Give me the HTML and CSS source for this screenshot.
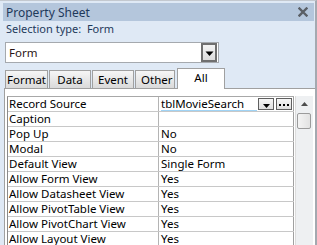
FILE: index.html
```html
<!DOCTYPE html>
<html>
<head>
<meta charset="utf-8">
<link rel="stylesheet" href="styles.css">
</head>
<body>
<div class="window">
  <div class="titlebar">
    <span class="title">Property Sheet</span>
    <svg class="close" width="10" height="10" viewBox="0 0 10 10"><path d="M1.5 1.5 L8.5 8.5 M8.5 1.5 L1.5 8.5" stroke="#5a5f66" stroke-width="2.4" stroke-linecap="square"/></svg>
  </div>
  <div class="seltype">Selection type:&nbsp;&nbsp;Form</div>
  <div class="combo">
    <span class="combo-text">Form</span>
    <span class="combo-btn"><svg width="9" height="6" viewBox="0 0 9 6"><path d="M0.5 0.5 H8.5 L4.5 5 Z" fill="#000"/></svg></span>
  </div>
  <div class="tabs">
    <div class="tab t-format">Format</div>
    <div class="tab t-data">Data</div>
    <div class="tab t-event">Event</div>
    <div class="tab t-other">Other</div>
    <div class="tab active t-all">All</div>
  </div>
  <div class="panel">
    <div class="grid">
      <div class="row"><div class="name">Record Source</div><div class="value first"><span class="vtext">tblMovieSearch</span><span class="mini-btn drop"><svg width="7" height="4" viewBox="0 0 7 4"><path d="M0 0 H7 L3.5 4 Z" fill="#000"/></svg></span><span class="mini-btn dots"><svg width="10" height="2" viewBox="0 0 10 2"><rect x="0" y="0" width="2" height="2" fill="#000"/><rect x="4" y="0" width="2" height="2" fill="#000"/><rect x="8" y="0" width="2" height="2" fill="#000"/></svg></span></div></div>
      <div class="row"><div class="name">Caption</div><div class="value"></div></div>
      <div class="row"><div class="name">Pop Up</div><div class="value">No</div></div>
      <div class="row"><div class="name">Modal</div><div class="value">No</div></div>
      <div class="row"><div class="name">Default View</div><div class="value">Single Form</div></div>
      <div class="row"><div class="name">Allow Form View</div><div class="value">Yes</div></div>
      <div class="row"><div class="name">Allow Datasheet View</div><div class="value">Yes</div></div>
      <div class="row"><div class="name">Allow PivotTable View</div><div class="value">Yes</div></div>
      <div class="row"><div class="name">Allow PivotChart View</div><div class="value">Yes</div></div>
      <div class="row"><div class="name">Allow Layout View</div><div class="value">Yes</div></div>
    </div>
    <div class="scrollbar">
      <div class="sb-up"><svg width="7" height="4" viewBox="0 0 7 4"><path d="M0 4 H7 L3.5 0 Z" fill="#4d4d4d"/></svg></div>
      <div class="sb-thumb"></div>
    </div>
  </div>
</div>
</body>
</html>
```
FILE: styles.css
```css
* { box-sizing: border-box; }
html, body {
  margin: 0;
  padding: 0;
  background: #dfe9f5;
}
body {
  width: 317px;
  height: 245px;
  overflow: hidden;
  font-family: "Noto Sans", "DejaVu Sans", sans-serif;
  font-size: 11px;
}
.window {
  width: 317px;
  height: 245px;
  border-right: 2px solid #a4a9b0;
  border-top: 1px solid #c3c8cf;
  background: #dfe9f5;
  padding-top: 2px;
  overflow: hidden;
}
.titlebar {
  margin: 0 1px 0 3px;
  height: 18px;
  background: #b4c6dc;
  display: flex;
  align-items: center;
  justify-content: space-between;
  padding: 0 6px 0 3px;
}
.title {
  color: #1e395b;
  font-size: 12px;
}
.close { display: block; }
.seltype {
  height: 15px;
  line-height: 15px;
  padding-left: 6px;
  color: #1e395b;
  font-size: 11px;
}
.combo {
  margin: 6px 0 0 5px;
  width: 214px;
  height: 21px;
  border: 1px solid #a5a9ae;
  background: #fff;
  display: flex;
  align-items: center;
  justify-content: space-between;
  padding: 0 1px 0 3px;
}
.combo-text {
  color: #2a1414;
  font-size: 11.5px;
}
.combo-btn {
  width: 16px;
  height: 19px;
  border: 2px solid #6f6f6f;
  background: linear-gradient(#f4f4f4, #dcdcdc);
  display: flex;
  align-items: center;
  justify-content: center;
  padding-top: 2px;
}
.combo-btn svg { display: block; }
.tabs {
  margin: 5px 0 0 5px;
  height: 20px;
  display: flex;
  align-items: flex-end;
  gap: 1px;
  position: relative;
  z-index: 1;
}
.tab {
  height: 18px;
  border: 1px solid #a0a0a0;
  border-bottom: none;
  background: linear-gradient(#f6f6f6, #dadada);
  color: #000;
  font-size: 11.5px;
  display: flex;
  align-items: center;
  justify-content: center;
}
.t-format { width: 43px; }
.t-data { width: 42px; }
.t-event { width: 42px; }
.t-other { width: 40px; justify-content: flex-start; padding-left: 5px; }
.tab.active {
  height: 21px;
  width: 48px;
  background: #fff;
  margin-bottom: -1px;
  margin-left: 1px;
  padding-bottom: 3px;
}
.panel {
  margin-left: 4px;
  height: 200px;
  background: #fff;
  border-top: 1px solid #a0a0a0;
  border-left: 1px solid #a0a0a0;
  padding: 7px 0 0 2px;
  display: flex;
  align-items: flex-start;
}
.grid {
  width: 287px;
  border-left: 1px solid #8a8a8a;
  border-top: 1px solid #a8a8a8;
}
.row {
  display: flex;
  height: 15px;
  border-bottom: 1px solid #c8c8c8;
}
.name, .value {
  line-height: 13px;
  font-size: 11.5px;
  color: #000;
  white-space: nowrap;
  overflow: hidden;
}
.name {
  width: 151px;
  border-right: 1px solid #b4b4b4;
  padding-left: 1px;
}
.value {
  width: 135px;
  border-right: 1px solid #a0a0a0;
  padding-left: 2px;
}
.value.first {
  display: flex;
  align-items: flex-start;
  padding-right: 1px;
}
.vtext {
  flex: 1;
  border-bottom: 1px solid #9fd3f5;
  height: 14px;
  line-height: 13px;
}
.mini-btn {
  margin-top: 1px;
  width: 16px;
  height: 12px;
  border: 1px solid #5f5f5f;
  background: linear-gradient(#f6f6f6, #dedede);
  display: flex;
  align-items: flex-end;
  justify-content: center;
}
.mini-btn svg { display: block; }
.mini-btn.drop { padding-bottom: 1px; margin-left: 1px; }
.mini-btn.dots {
  margin-left: 2px;
  align-items: center;
  padding-top: 1px;
}
.scrollbar {
  margin-left: 1px;
  width: 18px;
  height: 160px;
  background: #eef0f2;
  border-left: 1px solid #dcdcdc;
  display: flex;
  flex-direction: column;
  align-items: center;
}
.sb-up {
  height: 16px;
  width: 100%;
  display: flex;
  align-items: center;
  justify-content: center;
}
.sb-up svg { display: block; }
.sb-thumb {
  margin-top: 1px;
  width: 14px;
  height: 16px;
  border: 1px solid #9b9b9b;
  border-radius: 2px;
  background: linear-gradient(90deg, #f4f4f4, #e2e2e2);
  margin-right: 2px;
}
```
